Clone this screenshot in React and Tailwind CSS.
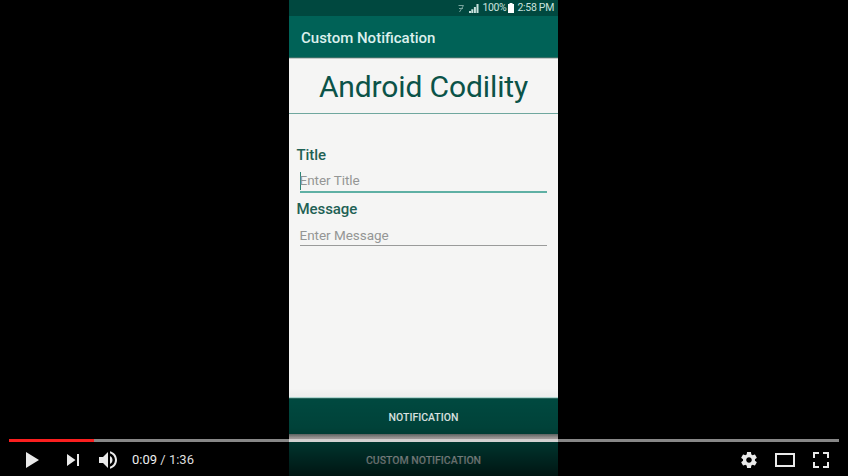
const GEAR =
  "m 23.94,18.78 c .03,-0.25 .05,-0.51 .05,-0.78 0,-0.27 -0.02,-0.52 -0.05,-0.78 l 1.68,-1.32 c .15,-0.12 .19,-0.33 .09,-0.51 l -1.6,-2.76 c -0.09,-0.17 -0.31,-0.24 -0.48,-0.17 l -1.99,.8 c -0.41,-0.32 -0.86,-0.58 -1.35,-0.78 l -0.30,-2.12 c -0.02,-0.19 -0.19,-0.33 -0.39,-0.33 l -3.2,0 c -0.2,0 -0.36,.14 -0.39,.33 l -0.30,2.12 c -0.48,.2 -0.93,.47 -1.35,.78 l -1.99,-0.8 c -0.18,-0.07 -0.39,0 -0.48,.17 l -1.6,2.76 c -0.10,.17 -0.05,.39 .09,.51 l 1.68,1.32 c -0.03,.25 -0.05,.52 -0.05,.78 0,.26 .02,.52 .05,.78 l -1.68,1.32 c -0.15,.12 -0.19,.33 -0.09,.51 l 1.6,2.76 c .09,.17 .31,.24 .48,.17 l 1.99,-0.8 c .41,.32 .86,.58 1.35,.78 l .30,2.12 c .02,.19 .19,.33 .39,.33 l 3.2,0 c .2,0 .36,-0.14 .39,-0.33 l .30,-2.12 c .48,-0.2 .93,-0.47 1.35,-0.78 l 1.99,.8 c .18,.07 .39,0 .48,-0.17 l 1.6,-2.76 c .09,-0.17 .05,-0.39 -0.09,-0.51 l -1.68,-1.32 0,0 z m -5.94,2.01 c -1.54,0 -2.8,-1.25 -2.8,-2.8 0,-1.54 1.25,-2.8 2.8,-2.8 1.54,0 2.8,1.25 2.8,2.8 0,1.54 -1.25,2.8 -2.8,2.8 l 0,0 z";

const ICONS = {
  play: "M12 26V10l13 8z",
  next: "M12 24l8.5-6L12 12v12zM22 12v12h2V12h-2z",
  volume:
    "M8,21 L12,21 L17,26 L17,10 L12,15 L8,15 L8,21 Z M19,14 L19,22 C20.48,21.32 21.5,19.77 21.5,18 C21.5,16.26 20.48,14.74 19,14 ZM19,11.29 C21.89,12.15 24,14.83 24,18 C24,21.17 21.89,23.85 19,24.71 L19,26.77 C23.01,25.86 26,22.28 26,18 C26,13.72 23.01,10.14 19,9.23 L19,11.29 Z",
  settings: GEAR,
  theater: "M8 11h20v14H8zM10 13v10h16V13z",
  fullscreen:
    "M10 10h6v2h-4v4h-2zM20 10h6v6h-2v-4h-4zM10 20h2v4h4v2h-6zM24 20h2v6h-6v-2h4z",
};

function PlayerButton({ name, label }) {
  return (
    <button aria-label={label} className="size-9 shrink-0 text-[#eaeaea]">
      <svg viewBox="0 0 36 36" className="size-9" fill="currentColor" fillRule="evenodd">
        <path d={ICONS[name]} />
      </svg>
    </button>
  );
}

function StatusBar() {
  return (
    <div className="flex h-4 shrink-0 items-center justify-end bg-[#00483f] pr-[4px] text-[10.5px] leading-4 text-[#c9e2de]">
      <svg viewBox="0 0 8 9" className="mr-[4px] h-[9px] w-2 opacity-60" fill="none" stroke="currentColor">
        <path d="M1.5 1.5h5M6.5 1.5L2.5 8M2 4.5h4" />
      </svg>
      <svg viewBox="0 0 10 9" className="mr-[3px] h-[9px] w-[10px]" fill="currentColor">
        <path d="M0 9V7h2v2zM2.3 9V5.3h2V9zM4.9 9V3h2v6zM7.5 9V0H9.5v9z" />
      </svg>
      <span className="w-[23px] whitespace-nowrap tracking-[-0.35px]">100%</span>
      <svg viewBox="0 0 6 10" className="ml-[3px] mr-[3px] h-[10px] w-[6px] text-white" fill="currentColor">
        <path d="M1.5 0h3v1H6v9H0V1h1.5z" />
      </svg>
      <span className="whitespace-nowrap tracking-[-0.3px]">2:58 PM</span>
    </div>
  );
}

function Field({ label, placeholder, focused }) {
  return (
    <div className="h-[54px] pl-[7.5px] pr-[11px]">
      <div className="flex h-[22px] items-center text-[15px] font-medium tracking-[-0.08px] text-[#1f6155]">
        {label}
      </div>
      <div
        className={
          focused
            ? "ml-[3px] flex h-[27px] items-center border-b-2 border-[#5fb0a4] pt-[4px] text-[13.5px] tracking-[-0.03px] text-[#949695]"
            : "ml-[3px] flex h-[26px] items-center border-b border-[#9a9b9a] pt-[5px] text-[13.5px] tracking-[-0.03px] text-[#949695]"
        }
      >
        {focused && <span className="-mr-px h-[18px] w-px bg-[#2f8577]" />}
        {placeholder}
      </div>
    </div>
  );
}

function Phone() {
  return (
    <div className="ml-[289px] flex h-[476px] w-[269px] flex-col bg-[#f5f5f4]">
      <StatusBar />
      <div className="flex h-[41px] shrink-0 items-center bg-[#006257] pl-[12px] pt-[3px] text-[15px] font-medium text-[#dcf0ed]">
        Custom Notification
      </div>
      <div className="h-px shrink-0 bg-[#356f66]" />
      <div className="h-px shrink-0 bg-[#c3cac8]" />
      <div className="flex h-[54px] shrink-0 items-center justify-center pt-px text-[30px] tracking-[-0.12px] text-[#0b5348]">
        Android Codility
      </div>
      <div className="h-px shrink-0 bg-[#6fa79e]" />
      <div className="shrink-0 pt-[30px]">
        <Field label="Title" placeholder="Enter Title" focused />
        <Field label="Message" placeholder="Enter Message" />
      </div>
      <div className="mt-auto h-px shrink-0 bg-[#b4dcd6]" />
      <div className="flex h-[36px] shrink-0 items-center justify-center border-t border-[#2b695f] bg-[#004c42] pt-[2px] text-[10.5px] font-medium text-[#eefaf8]">
        NOTIFICATION
      </div>
      <div className="h-[8px] shrink-0 bg-linear-to-b from-[#747c7a] via-[#d2cbc9] via-50% to-[#eeeae9]" />
      <div className="flex h-[34px] shrink-0 items-center justify-center bg-[#004c42] pt-[3px] text-[10.5px] font-medium text-[#e2f1ef]">
        CUSTOM NOTIFICATION
      </div>
    </div>
  );
}

export default function App() {
  return (
    <div className="relative flex h-[476px] w-[848px] overflow-hidden bg-black font-[Roboto,sans-serif]">
      <Phone />
      <div className="absolute inset-x-0 bottom-0 h-[88px] bg-linear-to-b from-transparent via-black/14 via-45% to-black/72" />
      <div className="absolute inset-x-[9px] top-[439px] h-[37px]">
        <div className="h-[3px] bg-white/53">
          <div className="h-[3px] w-[85px] bg-[#fb1f1f]" />
        </div>
        <div className="flex h-9 items-center pl-[5px]">
          <PlayerButton name="play" label="Play" />
          <div className="w-[5px]" />
          <PlayerButton name="next" label="Next" />
          <PlayerButton name="volume" label="Mute" />
          <span className="ml-[5px] text-[13px] leading-9 text-[#dedede]">
            <span className="text-[#eeeeee]">0:09</span> / 1:36
          </span>
          <div className="ml-auto flex">
            <PlayerButton name="settings" label="Settings" />
            <PlayerButton name="theater" label="Theater mode" />
            <PlayerButton name="fullscreen" label="Full screen" />
          </div>
        </div>
      </div>
    </div>
  );
}
